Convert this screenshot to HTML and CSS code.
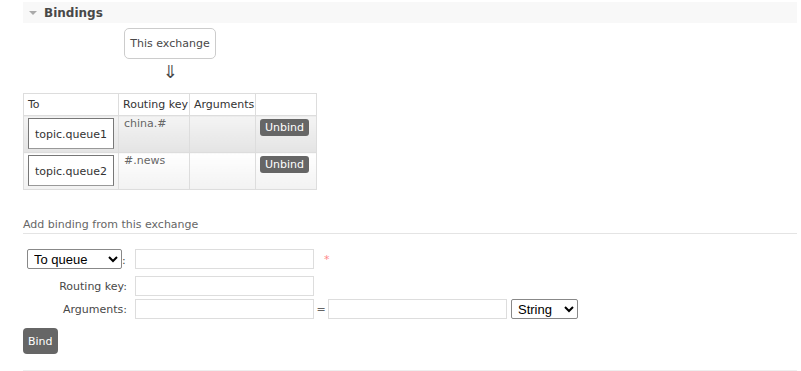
FILE: index.html
```html
<!DOCTYPE html>
<html lang="en">
<head>
    <meta charset="UTF-8">
    <title>Bindings</title>
    <link rel="stylesheet" href="styles.css">
</head>
<body>
    <div class="section">
        <div class="section-head">
            <span class="tri"></span>
            <h2>Bindings</h2>
        </div>

        <div class="diagram">
            <div class="exchange-box">This exchange</div>
            <div class="arrow">&#8659;</div>
        </div>

        <table class="bindings">
            <colgroup>
                <col class="col-to">
                <col class="col-key">
                <col class="col-args">
                <col class="col-act">
            </colgroup>
            <thead>
                <tr>
                    <th>To</th>
                    <th>Routing key</th>
                    <th>Arguments</th>
                    <th></th>
                </tr>
            </thead>
            <tbody>
                <tr class="alt1">
                    <td><span class="queue-box">topic.queue1</span></td>
                    <td class="key">china.#</td>
                    <td></td>
                    <td><button class="btn small">Unbind</button></td>
                </tr>
                <tr class="alt2">
                    <td><span class="queue-box">topic.queue2</span></td>
                    <td class="key">#.news</td>
                    <td></td>
                    <td><button class="btn small">Unbind</button></td>
                </tr>
            </tbody>
        </table>

        <h3 class="sub">Add binding from this exchange</h3>

        <form class="bind-form" onsubmit="return false">
            <div class="row">
                <div class="label">
                    <select class="sel sel-dest">
                        <option>To queue</option>
                        <option>To exchange</option>
                    </select>:
                </div>
                <input type="text" class="field">
                <span class="mand">*</span>
            </div>
            <div class="row">
                <div class="label">Routing key:</div>
                <input type="text" class="field">
            </div>
            <div class="row">
                <div class="label">Arguments:</div>
                <input type="text" class="field">
                <span class="eq">=</span>
                <input type="text" class="field">
                <select class="sel sel-type">
                    <option>String</option>
                    <option>Number</option>
                    <option>Boolean</option>
                </select>
            </div>
            <button type="submit" class="btn big">Bind</button>
        </form>

        <div class="bottom-line"></div>
    </div>
</body>
</html>
```

FILE: styles.css
```css
body {
    margin: 0;
    padding: 0;
    font-family: "DejaVu Sans", Verdana, sans-serif;
    font-size: 11px;
    color: #484848;
    background: white;
}
.section {
    padding: 2px 4px 0 23px;
}
.section-head {
    display: flex;
    align-items: center;
    height: 21px;
    background: #f8f8f8;
}
.tri {
    width: 0;
    height: 0;
    margin: 1px 7px 0 6px;
    border-left: 4px solid transparent;
    border-right: 4px solid transparent;
    border-top: 4px solid #aaa;
}
.section-head h2 {
    margin: 0;
    font-size: 12px;
    font-weight: bold;
    color: #484848;
}
.diagram {
    display: flex;
    flex-direction: column;
    align-items: center;
    width: 294px;
    padding-top: 5px;
}
.exchange-box {
    width: 90px;
    height: 29px;
    line-height: 29px;
    text-align: center;
    border: 1px solid #ccc;
    border-radius: 5px;
    color: #484848;
}
.arrow {
    height: 34px;
    font-size: 18px;
    line-height: 26px;
    color: #484848;
}
table.bindings {
    border-collapse: collapse;
    table-layout: fixed;
    width: 294px;
    border: 1px solid #ddd;
}
.col-to { width: 95px; }
.col-key { width: 71px; }
.col-args { width: 66px; }
.col-act { width: 61px; }
.bindings th, .bindings td {
    border: 1px solid #ddd;
    text-align: left;
    vertical-align: top;
    font-weight: normal;
    white-space: nowrap;
    padding: 0 4px;
}
.bindings th {
    height: 21px;
    line-height: 21px;
    color: #333;
    background: white;
}
.bindings td {
    height: 37px;
    padding-top: 2px;
    padding-bottom: 0;
    box-sizing: border-box;
}
tr.alt1 td {
    background: linear-gradient(#f4f4f4, #e4e4e4);
}
tr.alt2 td {
    background: linear-gradient(#ffffff, #f2f2f2);
}
.queue-box {
    display: block;
    width: 84px;
    height: 29px;
    line-height: 31px;
    text-align: center;
    background: white;
    border: 1px solid #777;
    border-bottom-color: #999;
    color: #333;
}
.bindings td.key {
    color: #666;
    padding-top: 1px;
    padding-left: 5px;
}
.btn {
    font-family: "DejaVu Sans", Verdana, sans-serif;
    background: #666;
    color: white;
    border: none;
    border-radius: 3px;
    cursor: pointer;
}
.btn.small {
    margin: 1px 0 0 0;
    padding: 0 5px;
    height: 17px;
    font-size: 11px;
    line-height: 17px;
}
.btn.big {
    margin-top: 6px;
    padding: 0 5px;
    height: 26px;
    font-size: 11px;
    border-radius: 4px;
}
.sub {
    margin: 28px 0 0;
    padding-bottom: 2px;
    font-size: 11px;
    font-weight: normal;
    color: #666;
    border-bottom: 1px solid #e4e4e4;
}
.bind-form {
    padding-top: 15px;
}
.row {
    display: flex;
    align-items: center;
    height: 20px;
    margin-bottom: 3px;
}
.row:first-child {
    margin-bottom: 7px;
}
.label {
    width: 104px;
    padding-right: 8px;
    text-align: right;
    color: #484848;
}
.row:first-child .label {
    text-align: left;
    padding-left: 4px;
    width: 100px;
}
.sel {
    font-family: "Liberation Sans", Arial, sans-serif;
    font-size: 13px;
    color: #000;
    background: white;
    border: 1px solid #888;
    border-radius: 2px;
    height: 20px;
    padding: 0 2px;
}
.sel-dest { width: 95px; }
.sel-type { width: 67px; margin-left: 4px; }
.field {
    box-sizing: border-box;
    width: 179px;
    height: 20px;
    margin: 0;
    border: 1px solid #ddd;
    padding: 2px;
    outline: none;
}
.mand {
    margin-left: 10px;
    color: #f88;
    font-size: 11px;
}
.eq {
    width: 14px;
    text-align: center;
    color: #666;
}
.bottom-line {
    margin-top: 16px;
    border-top: 1px solid #eee;
}
```
